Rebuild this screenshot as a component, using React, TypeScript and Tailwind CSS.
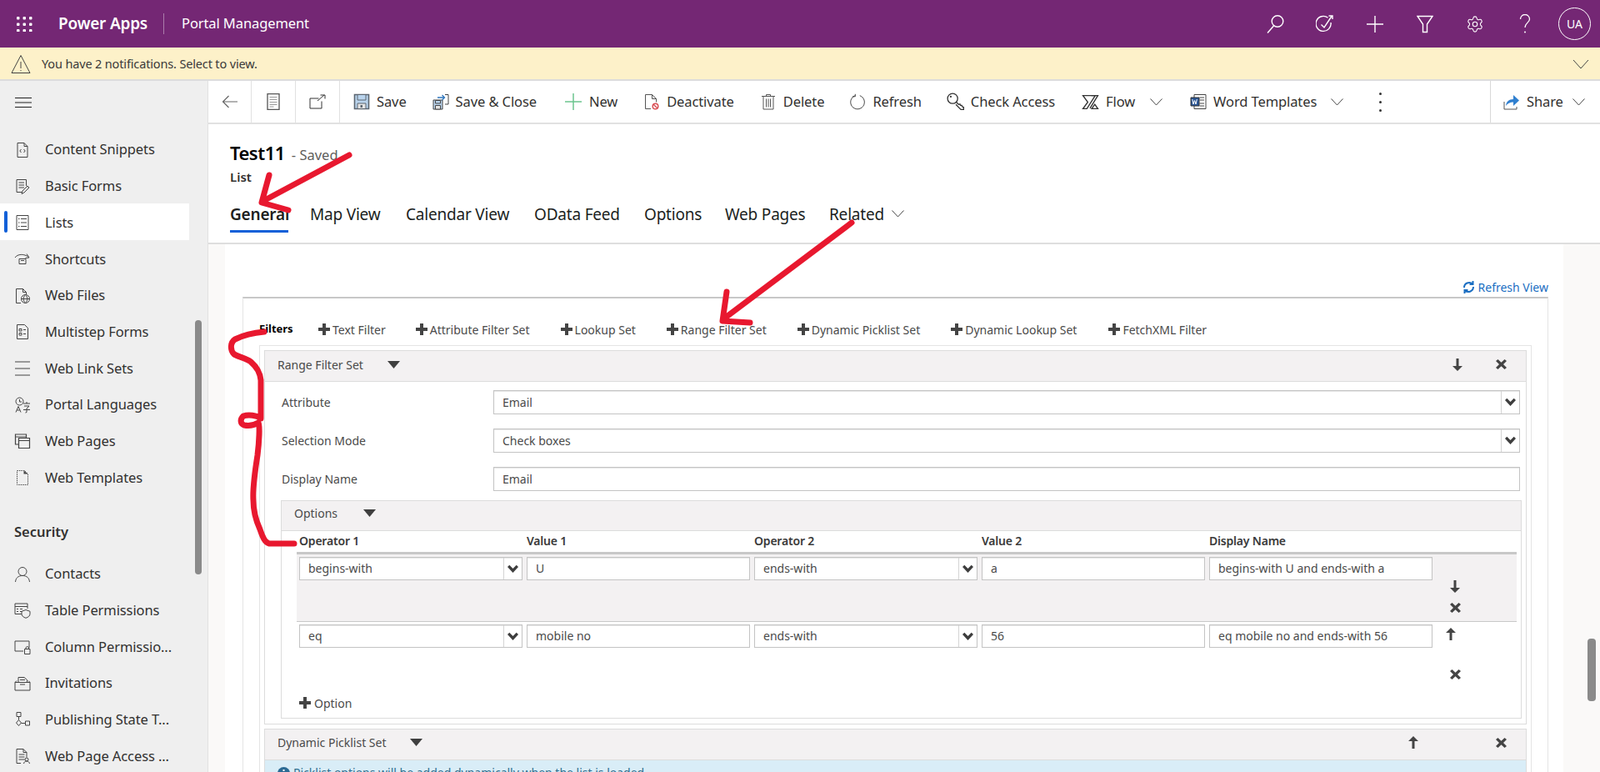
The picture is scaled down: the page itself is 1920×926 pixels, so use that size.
import type {ReactNode} from 'react';
import {Settings} from 'lucide-react';

const Ico = ({children, size = 20, w = 1}: {children: ReactNode; size?: number; w?: number}) => (
  <svg width={size} height={size} viewBox="0 0 20 20" fill="none" stroke="currentColor" strokeWidth={w} className="shrink-0">
    {children}
  </svg>
);

const Lines = ({x1, x2, ys}: {x1: number; x2: number; ys: number[]}) => (
  <>
    {ys.map(y => (
      <path key={y} d={`M${x1} ${y}H${x2}`} />
    ))}
  </>
);

const Chevron = ({className = ''}: {className?: string}) => (
  <svg width="15" height="9" viewBox="0 0 15 9" fill="none" stroke="#444" strokeWidth="1" className={`shrink-0 ${className}`}>
    <path d="M.5.5l7 7.500 7-7.500" />
  </svg>
);

const sideIcons: Record<string, ReactNode> = {
  snippets: (
    <>
      <path d="M4 1.500h8l4 4v13H4z M12 1.500v4h4" />
      <path d="M8.500 9 6.800 11l1.700 2 M11.500 9l1.700 2-1.700 2" />
    </>
  ),
  forms: (
    <>
      <path d="M14.500 9V1.500H3v15h6" />
      <Lines x1={5.500} x2={12} ys={[5, 8, 11]} />
      <path d="M9 18.500l1-3.500 6-6 2 2-6 6z" />
    </>
  ),
  lists: (
    <>
      <path d="M3 1.500h14v17H3z" />
      <Lines x1={5} x2={6.500} ys={[5.500, 10, 14.500]} />
      <Lines x1={8} x2={15} ys={[5.500, 10, 14.500]} />
    </>
  ),
  shortcuts: (
    <>
      <path d="M1 8C4 3.500 12 3 17.500 7.500" />
      <path d="M15 3.500l3 4.500-4.500.5" />
      <path d="M6 9.500h8v6H6z M8 11.500h4" />
    </>
  ),
  files: (
    <>
      <path d="M8 18.500H2.500V1.500h8l4 4V8 M10.500 1.500v4h4" />
      <circle cx="13.500" cy="13.500" r="5" />
      <path d="M8.500 13.500h10 M13.500 8.500c-3 3-3 7 0 10 c3-3 3-7 0-10" />
    </>
  ),
  multistep: (
    <>
      <path d="M3.500 1.500h9l4 4v13h-13z" />
      <path d="M6 6.500h3v2.500H6z M6 11.500h3V14H6z M11 7.500h3 M11 12.500h3" />
    </>
  ),
  links: <Lines x1={1} x2={19} ys={[2, 10, 18]} />,
  languages: (
    <>
      <circle cx="6.500" cy="5.500" r="4.500" />
      <path d="M6.500 3v3h2.500 M2 18.500l3-7 3 7 M3.300 16h3.400 M11 8h8 M15 6v2 M12 11h6l-3 3 M11 15.500h8 M15 14v4.500l-1.500.5" />
    </>
  ),
  pages: (
    <>
      <path d="M1.500 2h13v12h-13z M1.500 5h13" strokeWidth="1.200" />
      <path d="M5.500 6.500h13v12h-13z M5.500 9.500h13" fill="#efefef" strokeWidth="1.200" />
    </>
  ),
  templates: (
    <>
      <path d="M3.500 1.500h9l4 4v13h-13z" strokeDasharray="1.400 1.100" />
      <path d="M11.500 1.500l5 4h-5z" fill="#444" stroke="none" />
    </>
  ),
  contacts: (
    <>
      <circle cx="10" cy="6.500" r="5" />
      <path d="M1.500 19c.5-5 3.500-7.500 8.500-7.500s8 2.500 8.500 7.500" />
    </>
  ),
  table: (
    <>
      <path d="M9 14.500H1V2h15v6 M1 5.500h15" />
      <path d="M3 8.500h2 M7 8.500h3 M3 11.500h2 M7 11.500h2" />
      <path d="M14 9.500l5 1.800v3c0 2.500-2 4-5 5-3-1-5-2.500-5-5v-3z" />
    </>
  ),
  column: (
    <>
      <path d="M11 15H1V3h17v8" />
      <path d="M12.500 12.500h6.500v6h-6.500z M14 12.500v-1.500a1.800 1.800 0 013.500 0v1.500" />
    </>
  ),
  invitations: (
    <>
      <path d="M5 8V2.500h7l3.500 3V8" />
      <path d="M1 8.500h18v9.500H1z M1 8.500l2-2 M19 8.500l-2-2" />
      <Lines x1={7} x2={13} ys={[5.500, 8.500, 11]} />
    </>
  ),
  publishing: (
    <>
      <path d="M3 1.500h5v5H3z M13.500 12h5v5h-5z" />
      <path d="M5.500 6.500v4 M5.500 10.500l3 3.500-3 3.500-3-3.500z M8.500 14.500h5" />
    </>
  ),
  access: (
    <>
      <path d="M8 18.500H3V1.500h8l4 4v6 M11 1.500v4h4" />
      <Lines x1={5.500} x2={12.500} ys={[8, 11, 14]} />
      <circle cx="15" cy="14" r="2" />
      <path d="M11.500 19c.4-2 1.600-3 3.500-3s3.100 1 3.500 3" />
    </>
  ),
};

const nav1 = [
  ['snippets', 'Content Snippets'],
  ['forms', 'Basic Forms'],
  ['lists', 'Lists'],
  ['shortcuts', 'Shortcuts'],
  ['files', 'Web Files'],
  ['multistep', 'Multistep Forms'],
  ['links', 'Web Link Sets'],
  ['languages', 'Portal Languages'],
  ['pages', 'Web Pages'],
  ['templates', 'Web Templates'],
];
const nav2 = [
  ['contacts', 'Contacts'],
  ['table', 'Table Permissions'],
  ['column', 'Column Permissio...'],
  ['invitations', 'Invitations'],
  ['publishing', 'Publishing State T...'],
  ['access', 'Web Page Access ...'],
];

const NavItem = ({icon, label}: {icon: string; label: string}) => {
  const active = label === 'Lists';
  return (
    <div className={`relative flex items-center h-[43.7px] w-[227px] pl-[17px] pt-[2px] gap-[17px] text-[16.5px] text-[#323130] ${active ? 'bg-white' : ''}`}>
      {active && <span className="absolute left-[5px] top-[9px] h-[26px] w-[4px] rounded-sm bg-[#1160d8]" />}
      <span className="text-[#444] flex">
        <Ico>{sideIcons[icon]}</Ico>
      </span>
      <span className="whitespace-nowrap tracking-[-0.1px]">{label}</span>
    </div>
  );
};

const Sidebar = () => (
  <aside className="relative w-[250px] shrink-0 bg-[#efefef] border-r border-[#e1e1e1] overflow-hidden">
    <div className="h-[60px] pl-[17px] pt-[15px]">
      <svg width="22" height="22" viewBox="0 0 22 22" stroke="#222" strokeWidth="1.100">
        <path d="M1 5.500h20 M1 11h20 M1 16.500h20" />
      </svg>
    </div>
    {nav1.map(([icon, label]) => (
      <NavItem key={label} icon={icon} label={label} />
    ))}
    <div className="h-[72px] pl-[17px] pt-[32px] text-[16.5px] font-semibold text-[#323130]">Security</div>
    {nav2.map(([icon, label]) => (
      <NavItem key={label} icon={icon} label={label} />
    ))}
    <div className="absolute left-[234px] top-[287px] h-[305px] w-[8px] rounded bg-[#8a8a8a]" />
  </aside>
);

const cmdIcons: Record<string, ReactNode> = {
  save: (
    <>
      <path d="M1.500 1.500h17v17h-17z" fill="#b9d3ec" stroke="#5c6670" strokeWidth="1.600" />
      <path d="M5 1.500h10v6.500H5z" fill="#b9d3ec" stroke="#5c6670" />
      <path d="M5 12h10v6.500H5z" fill="#e4e4e4" stroke="#5c6670" />
      <path d="M8.500 14h2.500v3H8.500z" fill="#5c6670" stroke="none" />
    </>
  ),
  saveClose: (
    <>
      <path d="M1 8h11v11H1z" fill="#b9d3ec" stroke="#444" />
      <path d="M3.500 8.500h6V12h-6z" fill="#b9d3ec" stroke="#444" />
      <path d="M3.500 14.500h6V19h-6z" fill="#e4e4e4" stroke="#444" />
      <path d="M15 1.500h4V13h-4" stroke="#444" fill="none" />
      <path d="M6 5h8.500M11.500 2l3 3-3 3" stroke="#2f76bd" strokeWidth="1.300" />
    </>
  ),
  deactivate: (
    <>
      <path d="M9 18.500H2.500V1.500h8l5 5v4 M10.500 1.500v5h5" stroke="#555" />
      <circle cx="14.500" cy="15.500" r="3.300" stroke="#d94f55" strokeWidth="1.500" />
      <path d="M12.200 13.200l4.600 4.600" stroke="#d94f55" strokeWidth="1.500" />
    </>
  ),
  trash: (
    <>
      <path d="M2 3.500h16 M7.500 3.500V1.500h5v2 M4 3.500h12v15.500H4z" stroke="#555" />
      <path d="M7.500 6.500v10 M10 6.500v10 M12.500 6.500v10" stroke="#555" />
    </>
  ),
  refresh: (
    <>
      <path d="M7 2.800a8.300 8.300 0 105.800-.1" stroke="#444" />
      <path d="M7.300 .8v3H4" stroke="#444" />
    </>
  ),
  key: (
    <>
      <circle cx="6.500" cy="6.500" r="5.500" stroke="#333" strokeWidth="1.200" />
      <path d="M10.500 10.500 13 13l1.500-.5.500 1.500 1.500 0 .5 1.500 1.500.5V18.500h-3L10 13" stroke="#333" strokeWidth="1.200" />
      <circle cx="4.500" cy="4.500" r="1" fill="#333" stroke="none" />
    </>
  ),
  flow: (
    <>
      <path d="M1.500 2.500H15.500L6 17.500H1.500L7 10z" stroke="#333" strokeWidth="1.300" />
      <path d="M11 2.500H18.500L9.500 17 M18.500 17.500H11.500L15 12.500z" stroke="#333" strokeWidth="1.300" />
    </>
  ),
  word: (
    <>
      <path d="M5 1.500h14v17H5z" stroke="#444" />
      <path d="M11.500 5H17 M11.500 8H17 M11.500 12H17 M11.500 15H17" stroke="#444" />
      <path d="M1 5h10v10H1z" fill="#2b5797" stroke="#333" />
      <path d="M2.800 7l1.200 6 1.500-4.500L7 13l1.300-6" stroke="#fff" />
    </>
  ),
};

const Cmd = ({icon, label, left, chevron, chevronLeft = 17, gap = 8}: {icon: ReactNode; label: string; left: number; chevron?: boolean; chevronLeft?: number; gap?: number}) => (
  <div className="flex items-center h-full text-[16.5px] text-[#323130]" style={{marginLeft: left, gap}}>
    {icon}
    <span className="whitespace-nowrap tracking-[-0.1px]">{label}</span>
    {chevron && (
      <span className="flex" style={{marginLeft: chevronLeft - gap}}>
        <Chevron />
      </span>
    )}
  </div>
);

const CommandBar = () => (
  <div className="flex items-stretch h-[52px] shrink-0 border-b-2 border-[#e1e1e1] bg-white">
    <div className="flex items-center justify-center w-[52px] border-r border-[#e1e1e1]">
      <svg width="20" height="20" viewBox="0 0 20 20" fill="none" stroke="#666" strokeWidth="1.200">
        <path d="M19 10H1.500 M8.500 3 1.500 10 8.500 17" />
      </svg>
    </div>
    <div className="flex items-center justify-center w-[53px] border-r border-[#e1e1e1]">
      <Ico>
        <path d="M3 .5h14v19H3z" stroke="#555" strokeWidth="1.300" />
        <path d="M5.500 4.500h9 M5.500 7.500h9 M5.500 10.500h9 M5.500 13.500h9 M5.500 16h5" stroke="#999" />
      </Ico>
    </div>
    <div className="flex items-center justify-center w-[53px] border-r border-[#e1e1e1] text-[#333]">
      <Ico>
        <path d="M11.500 6H1v12h14V9.500" />
        <path d="M10 9l8-7m-4.500 0H19v4.500" />
      </Ico>
    </div>
    <Cmd left={16} icon={<Ico>{cmdIcons.save}</Ico>} label="Save" />
    <Cmd left={31} icon={<Ico>{cmdIcons.saveClose}</Ico>} label="Save & Close" />
    <Cmd left={34} gap={9} icon={
      <svg width="20" height="20" viewBox="0 0 20 20" stroke="#6cc58f" strokeWidth="1.500" className="shrink-0">
        <path d="M10 0v20 M0 10h20" />
      </svg>
    } label="New" />
    <Cmd left={31} icon={<Ico>{cmdIcons.deactivate}</Ico>} label="Deactivate" />
    <Cmd left={31} icon={<Ico>{cmdIcons.trash}</Ico>} label="Delete" />
    <Cmd left={30} icon={<Ico>{cmdIcons.refresh}</Ico>} label="Refresh" />
    <Cmd left={30} gap={7} icon={<Ico size={22}>{cmdIcons.key}</Ico>} label="Check Access" />
    <Cmd left={32} icon={<Ico size={21}>{cmdIcons.flow}</Ico>} label="Flow" chevron chevronLeft={18} />
    <Cmd left={33} icon={<Ico>{cmdIcons.word}</Ico>} label="Word Templates" chevron />
    <div className="flex flex-col justify-center gap-[7px] ml-[43px]">
      <span className="w-[3px] h-[3px] rounded-full bg-[#333]" />
      <span className="w-[3px] h-[3px] rounded-full bg-[#333]" />
      <span className="w-[3px] h-[3px] rounded-full bg-[#333]" />
    </div>
    <div className="ml-auto flex items-center w-[132px] pl-[15px] gap-[7px] border-l border-[#d8d8d8] text-[16.5px] text-[#323130]">
      <svg width="21" height="22" viewBox="0 0 21 22" fill="none" className="shrink-0">
        <path d="M1 11v9h15v-3" stroke="#555" />
        <path d="M3 16c.5-5 3.500-8 9-8V3l7 6.500-7 6.500v-4.500c-4 0-7 1.500-9 4.500z" fill="#2f7fcf" />
      </svg>
      <span className="tracking-[-0.1px]">Share</span>
      <Chevron className="ml-[4px]" />
    </div>
  </div>
);

const tabs = [
  ['General', 70, 26],
  ['Map View', 87, 26],
  ['Calendar View', 125, 28],
  ['OData Feed', 104, 29],
  ['Options', 70, 28],
  ['Web Pages', 97, 27],
  ['Related', 64, 28],
] as const;

const Title = () => (
  <div className="h-[144px] shrink-0 border-b-2 border-[#dedede] pl-[26px] bg-white relative">
    <div className="flex items-baseline gap-[8px] pt-[18px] h-[50px]">
      <span className="text-[22px] font-semibold text-black tracking-[-0.5px]">Test11</span>
      <span className="text-[16.5px] text-[#605e5c]">- Saved</span>
    </div>
    <div className="text-[15px] font-semibold text-[#323130] h-[38px] leading-[24px] mt-[1px] mb-[1px]">List</div>
    <div className="flex items-center h-[35px]">
      {tabs.map(([name, w, ml], i) => (
        <div key={name} className={`relative h-full flex items-center pt-[2px] whitespace-nowrap text-[19px] tracking-[-0.2px] text-[#201f1e] ${i === 0 ? 'font-semibold' : ''}`} style={{width: w, marginLeft: i === 0 ? 0 : ml}}>
          {name}
          {i === 0 && <span className="absolute left-0 right-0 bottom-[-5px] h-[3px] bg-[#1160d8]" />}
        </div>
      ))}
      <Chevron className="ml-[11px]" />
    </div>
  </div>
);

const GlyphPlus = () => (
  <svg width="14" height="14" viewBox="0 0 14 14" fill="#444" className="shrink-0">
    <path d="M5 0h4v5h5v4H9v5H5V9H0V5h5z" />
  </svg>
);
const GlyphX = () => (
  <svg width="13" height="12" viewBox="0 0 13 12" fill="#444" className="shrink-0">
    <path d="M0 2 2.500 0 6.500 3.800 10.500 0 13 2 9 6l4 4-2.500 2-4-3.800L2.500 12 0 10l4-4z" />
  </svg>
);
const GlyphDown = () => (
  <svg width="12" height="15" viewBox="0 0 12 15" fill="#444" className="shrink-0">
    <path d="M4.500 0h3v9H12l-6 6-6-6h4.500z" />
  </svg>
);
const GlyphUp = () => (
  <svg width="12" height="15" viewBox="0 0 12 15" fill="#444" className="shrink-0">
    <path d="M4.500 15h3V6H12L6 0 0 6h4.500z" />
  </svg>
);
const Caret = ({left}: {left: number}) => (
  <svg width="15" height="9" viewBox="0 0 15 9" fill="#3f3f3f" className="shrink-0" style={{marginLeft: left}}>
    <path d="M0 0h15L7.500 9z" />
  </svg>
);

const SelectArrow = () => (
  <svg width="13" height="11" viewBox="0 0 13 11" fill="#3d3d3d">
    <path d="M0 3 2.300 .8 6.500 5 10.700 .8 13 3 6.500 10z" />
  </svg>
);

const Input = ({value, select, className}: {value: string; select?: boolean; className: string}) => (
  <div className={`flex items-stretch bg-white border border-[#c4c4c4] shadow-[inset_0_1px_1px_rgba(0,0,0,0.1)] text-[14px] text-[#4a4a4a] ${className}`}>
    <div className="flex-1 flex items-center pl-[10px] pb-[1px] whitespace-nowrap overflow-hidden">{value}</div>
    {select && (
      <div className="w-[22px] flex items-center justify-center border-l border-[#d4d4d4]">
        <SelectArrow />
      </div>
    )}
  </div>
);

const PanelHead = ({label, caretLeft, plus, className}: {label: string; caretLeft: number; plus?: ReactNode; className: string}) => (
  <div className={`flex items-center bg-[#f3f1f2] border-b border-[#dcdcdc] pl-[15px] text-[14px] text-[#4a4a4a] ${className}`}>
    <span className="whitespace-nowrap">{label}</span>
    <Caret left={caretLeft} />
    {plus}
  </div>
);

const filterButtons = [
  ['Text Filter', 30],
  ['Attribute Filter Set', 36],
  ['Lookup Set', 37],
  ['Range Filter Set', 37],
  ['Dynamic Picklist Set', 37],
  ['Dynamic Lookup Set', 37],
  ['FetchXML Filter', 38],
] as const;

const optionRows = [
  {op1: 'begins-with', v1: 'U', op2: 'ends-with', v2: 'a', name: 'begins-with U and ends-with a'},
  {op1: 'eq', v1: 'mobile no', op2: 'ends-with', v2: '56', name: 'eq mobile no and ends-with 56'},
];

const OptionsTable = () => (
  <div className="ml-[18px] mr-[5px]">
    <div className="flex items-center h-[28px] pb-[2px] border-b-[3px] border-[#c8c8c8] pl-[3px] text-[14px] font-semibold text-[#3a3a3a] tracking-[-0.2px]">
      {['Operator 1', 'Value 1', 'Operator 2', 'Value 2', 'Display Name'].map((h, i) => (
        <div key={h} className={`whitespace-nowrap ${i === 4 ? '' : 'w-[273px]'}`}>
          {h}
        </div>
      ))}
    </div>
    {optionRows.map((row, idx) => (
      <div key={row.op1} className={`flex pl-[3px] gap-[5px] pt-[3px] ${idx === 0 ? 'h-[81px] bg-[#f3f1f2] border-b border-[#c8c8c8]' : 'h-[85px]'}`}>
        <Input value={row.op1} select className="w-[268px] h-[28px]" />
        <Input value={row.v1} className="w-[268px] h-[28px]" />
        <Input value={row.op2} select className="w-[268px] h-[28px]" />
        <Input value={row.v2} className="w-[268px] h-[28px]" />
        <Input value={row.name} className="w-[268px] h-[28px]" />
        {idx === 0 ? (
          <div className="flex flex-col ml-[16px] pt-[28px] gap-[12px]">
            <GlyphDown />
            <GlyphX />
          </div>
        ) : (
          <div className="flex flex-col pt-[4px] gap-[35px]">
            <div className="ml-[11px]">
              <GlyphUp />
            </div>
            <div className="ml-[16px]">
              <GlyphX />
            </div>
          </div>
        )}
      </div>
    ))}
    <div className="flex items-center gap-[4px] h-[24px] pl-[3px] text-[14px] text-[#4a4a4a]">
      <GlyphPlus />
      Option
    </div>
  </div>
);

const Form = () => (
  <div className="flex-1 flex min-h-0 bg-[#faf9f8]">
    <div className="w-[20px] shrink-0" />
    <div className="w-[1606px] shrink-0 bg-white pl-[21px] pr-[18px] overflow-hidden">
      <div className="flex justify-end items-center h-[63px] pt-[41px] pb-[1px] gap-[4px] text-[14px] text-[#1b6ec2]">
        <svg width="15" height="17" viewBox="0 0 15 17" fill="none" stroke="#1b6ec2" strokeWidth="2">
          <path d="M2 9a6 6 0 0110-4.500 M13 8a6 6 0 01-10 4.500 M12.500 1v4h-4 M2.500 16v-4h4" />
        </svg>
        Refresh View
      </div>
      <div className="border-t-2 border-x border-x-[#e4e4e4] border-t-[#c8c8c8] pl-[19px] pr-[19px] h-[600px]">
        <div className="flex items-center gap-[3px] h-[56px] pt-[18px] text-[14px] text-[#4a4a4a]">
          <span className="font-bold text-black text-[13px] w-[68px]">Filters</span>
          {filterButtons.map(([name, ml], i) => (
            <div key={name} className="flex items-center gap-[3px] whitespace-nowrap" style={{marginLeft: i === 0 ? 0 : ml - 3}}>
              <GlyphPlus />
              {name}
            </div>
          ))}
        </div>
        <div className="border border-[#e4e4e4] p-[5px] h-[600px]">
          <div className="border border-[#dcdcdc] h-[449px]">
            <PanelHead
              label="Range Filter Set"
              caretLeft={29}
              className="h-[37px] pb-[4px]"
              plus={
                <>
                  <span className="ml-auto mr-[40px] flex">
                    <GlyphDown />
                  </span>
                  <span className="mr-[23px] flex">
                    <GlyphX />
                  </span>
                </>
              }
            />
            <div className="pt-[10px] pl-[20px] pr-[7px] flex flex-col gap-[17px]">
              {[
                ['Attribute', 'Email', true],
                ['Selection Mode', 'Check boxes', true],
                ['Display Name', 'Email', false],
              ].map(([label, value, select]) => (
                <div key={label as string} className="flex items-center h-[29px] text-[14px] text-[#4a4a4a]">
                  <span className="w-[254px] shrink-0">{label}</span>
                  <Input value={value as string} select={select as boolean} className="flex-1 h-[29px]" />
                </div>
              ))}
            </div>
            <div className="mt-[11px] ml-[19px] mr-[5px] h-[262px] border border-[#dcdcdc]">
              <PanelHead label="Options" caretLeft={31} className="h-[36px] pb-[6px]" />
              <OptionsTable />
            </div>
          </div>
          <div className="mt-[5px] border border-[#dcdcdc]">
            <PanelHead
              label="Dynamic Picklist Set"
              caretLeft={29}
              className="h-[37px] pb-[5px]"
              plus={
                <>
                  <span className="ml-auto mr-[93px] flex">
                    <GlyphUp />
                  </span>
                  <span className="mr-[23px] flex">
                    <GlyphX />
                  </span>
                </>
              }
            />
            <div className="flex items-start gap-[4px] h-[40px] pl-[15px] pt-[5px] bg-[#d9edf7] text-[14px] leading-[20px] text-[#31708f]">
              <svg width="15" height="15" viewBox="0 0 15 15" className="shrink-0 mt-[3px]">
                <circle cx="7.500" cy="7.500" r="7.500" fill="#2b6a94" />
                <path d="M6.500 6.500h2v5h-2z M6.500 3h2v2h-2z" fill="#fff" />
              </svg>
              Picklist options will be added dynamically when the list is loaded.
            </div>
          </div>
        </div>
      </div>
    </div>
    <div className="flex-1 pl-[29px]">
      <div className="mt-[473px] h-[75px] w-[10px] rounded bg-[#8a8a8a]" />
    </div>
  </div>
);

const Annotations = () => (
  <svg className="absolute inset-0 pointer-events-none" width="1920" height="926" fill="none" stroke="#e8182f" strokeLinecap="round" strokeLinejoin="round" strokeWidth="7">
    <path d="M419 186 316 241" />
    <path d="M323 210 314 243 346 252" />
    <path d="M1022 267 869 382" />
    <path d="M872 350 867 385 900 387" />
    <path d="M317 398C305 399 292 402 282 407 276 411 276 420 281 425 289 429 296 430 301 434 309 441 312 447 313 456L313 502C308 498 298 497 292 499 288 503 288 508 293 510 298 511 305 510 310 507 312 510 311 530 309 546 306 565 303 585 304 600 304 612 306 622 312 635 315 644 318 651 323 652L353 652" />
  </svg>
);

export default function App() {
  return (
    <div className="relative flex flex-col h-[926px] w-[1920px] overflow-hidden bg-white font-['Open_Sans',sans-serif]">
      <header className="flex items-center h-[57px] shrink-0 bg-[#742774] text-white pl-[20px]">
        <svg width="19" height="18" viewBox="0 0 19 18" fill="#fff" className="shrink-0">
          {[0, 7.500, 15].flatMap(y => [0, 7.500, 15].map(x => <rect key={`${x}-${y}`} x={x} y={y} width="3.500" height="3.500" rx="1" />))}
        </svg>
        <span className="ml-[31px] text-[19px] font-semibold whitespace-nowrap tracking-[-0.2px]">Power Apps</span>
        <span className="ml-[19px] w-px h-[25px] bg-white/40" />
        <span className="ml-[21px] text-[16.5px] whitespace-nowrap tracking-[-0.1px]">Portal Management</span>
        <div className="ml-auto flex items-center">
          <svg width="22" height="24" viewBox="0 0 22 24" fill="none" stroke="#fff" strokeWidth="1.400" className="mr-[38px]">
            <circle cx="14" cy="8.500" r="6.800" />
            <path d="M9.500 14 2 22.500" />
          </svg>
          <svg width="22" height="24" viewBox="0 0 22 24" fill="none" stroke="#fff" strokeWidth="1.400" className="mr-[39px]">
            <path d="M14.500 4.200A9 9 0 1018 10" />
            <path d="M6.500 12.500 10 16 19 2.500 M15.500 2H20V6" />
          </svg>
          <svg width="20" height="20" viewBox="0 0 20 20" stroke="#fff" strokeWidth="1.400" className="mr-[40px]">
            <path d="M10 0v20 M0 10h20" />
          </svg>
          <svg width="20" height="22" viewBox="0 0 20 22" fill="none" stroke="#fff" strokeWidth="1.400" className="mr-[39px]">
            <path d="M1 1.500h18L12.500 11v9.500h-5V11z" />
          </svg>
          <Settings className="w-[22px] h-[22px] mr-[42px]" strokeWidth={1.2} />
          <svg width="14" height="24" viewBox="0 0 14 24" fill="none" stroke="#fff" strokeWidth="1.300" className="mr-[33px]">
            <path d="M1.500 6a5.500 5.500 0 1111 0c0 4-5.500 4.500-5.500 10" />
            <circle cx="7" cy="21.500" r="1" fill="#fff" stroke="none" />
          </svg>
          <div className="w-[39px] h-[39px] mr-[11px] rounded-full border border-white flex items-center justify-center text-[14px]">UA</div>
        </div>
      </header>
      <div className="flex items-center h-[40px] pt-[2px] shrink-0 bg-[#fdf1c9] border-b-2 border-[#dcdcdc] pl-[13px] text-[14.5px] text-[#3a3a3a] tracking-[-0.15px]">
        <svg width="24" height="24" viewBox="0 0 24 24" fill="none" stroke="#444" strokeWidth="1" className="shrink-0">
          <path d="M12 1.500 23 22.500H1z M12 9v8 M12 19v1.200" />
        </svg>
        <span className="ml-[13px]">You have 2 notifications. Select to view.</span>
        <svg width="20" height="12" viewBox="0 0 20 12" fill="none" stroke="#444" strokeWidth="1" className="ml-auto mr-[13px]">
          <path d="M1 1l9 10 9-10" />
        </svg>
      </div>
      <div className="flex flex-1 min-h-0">
        <Sidebar />
        <main className="flex-1 flex flex-col min-w-0">
          <CommandBar />
          <Title />
          <Form />
        </main>
      </div>
      <Annotations />
    </div>
  );
}
